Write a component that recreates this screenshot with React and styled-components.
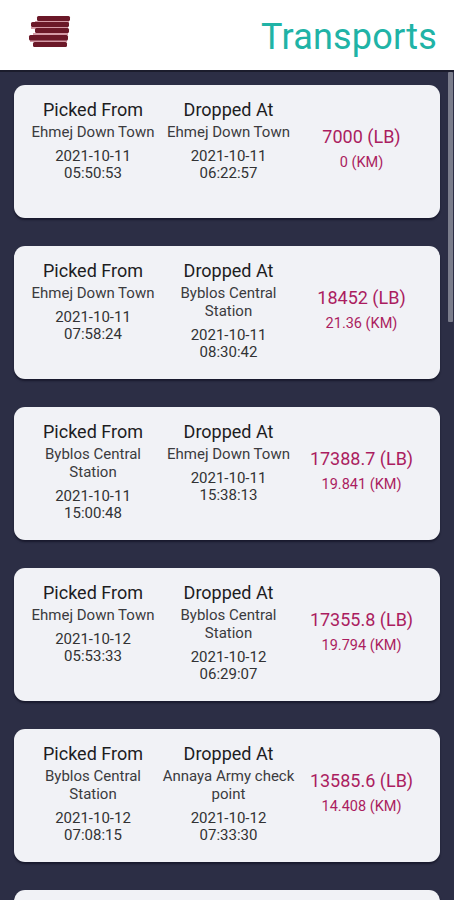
import React from "react";
import styled, { createGlobalStyle } from "styled-components";

const Global = createGlobalStyle`
  html, body { margin: 0; padding: 0; height: 100%; overflow: hidden; }
  body { font-family: Roboto, "Noto Sans", Arial, sans-serif; background: #2c2e45; }
  #root { height: 100%; }
`;

const Screen = styled.div`
  position: relative;
  width: 454px;
  height: 900px;
  display: flex;
  flex-direction: column;
  background: #2c2e45;
  overflow: hidden;
`;

const Header = styled.header`
  flex: 0 0 auto;
  height: 70px;
  background: #ffffff;
  border-bottom: 2px solid #1b1c2c;
  display: flex;
  align-items: center;
  justify-content: space-between;
  padding: 0 17px 0 28px;
`;

const Title = styled.h1`
  margin: 0;
  font-family: Roboto, sans-serif;
  font-weight: 400;
  font-size: 36px;
  color: #20b3a6;
  letter-spacing: 0.2px;
  line-height: 1;
  padding-top: 4px;
`;

const LogoWrap = styled.div`
  width: 44px;
  height: 36px;
  margin-top: -3px;
`;

const List = styled.main`
  flex: 1 1 auto;
  display: flex;
  flex-direction: column;
  gap: 28px;
  padding: 13px 14px 0 14px;
`;

const Card = styled.section`
  flex: 0 0 auto;
  height: 133px;
  box-sizing: border-box;
  background: #f1f2f6;
  border-radius: 11px;
  box-shadow: 0 2px 2px rgba(10, 10, 25, 0.55);
  display: grid;
  grid-template-columns: 136px 135px 1fr;
  padding: 14px 13px 0 11px;
`;

const Col = styled.div`
  display: flex;
  flex-direction: column;
  align-items: center;
  text-align: center;
`;

const Heading = styled.div`
  font-size: 18px;
  line-height: 22px;
  color: #1d1d1f;
`;

const Place = styled.div`
  font-size: 15px;
  line-height: 18px;
  color: #3b3b3e;
  margin-top: 2px;
`;

const Stamp = styled.div`
  font-size: 15px;
  line-height: 17px;
  color: #323234;
  margin-top: 7px;
`;

const PriceCol = styled.div`
  display: flex;
  flex-direction: column;
  align-items: center;
  justify-content: center;
  margin-top: -14px;
  padding-bottom: 6px;
`;

const Price = styled.div`
  font-size: 18px;
  line-height: 24px;
  color: #ab1d60;
`;

const Dist = styled.div`
  font-size: 14.5px;
  line-height: 20px;
  color: #ab1d60;
  margin-top: 4px;
`;

const ScrollThumb = styled.div`
  position: absolute;
  right: 1px;
  top: 72px;
  width: 5px;
  height: 250px;
  background: #7b7d8c;
  border-radius: 1px;
`;

const Logo = () => (
  <svg width="44" height="36" viewBox="0 0 44 36">
    <g fill="#d49aa6">
      <rect x="7" y="5" width="34" height="2" />
      <rect x="3" y="11" width="37" height="2" />
      <rect x="5" y="17" width="35" height="2" />
      <rect x="2" y="24" width="37" height="2" />
    </g>
    <g fill="#6b1828">
      <rect x="9" y="0" width="33" height="5" rx="1.5" />
      <rect x="3" y="6" width="38" height="5" rx="1.5" />
      <rect x="7" y="12" width="34" height="5" rx="1.5" />
      <rect x="1" y="19" width="39" height="5.5" rx="1.5" />
      <rect x="5" y="26" width="34" height="5" rx="1.5" />
    </g>
  </svg>
);

const trips = [
  {
    from: "Ehmej Down Town", fd: "2021-10-11", ft: "05:50:53",
    to: "Ehmej Down Town", td: "2021-10-11", tt: "06:22:57",
    price: "7000 (LB)", km: "0 (KM)",
  },
  {
    from: "Ehmej Down Town", fd: "2021-10-11", ft: "07:58:24",
    to: "Byblos Central Station", td: "2021-10-11", tt: "08:30:42",
    price: "18452 (LB)", km: "21.36 (KM)",
  },
  {
    from: "Byblos Central Station", fd: "2021-10-11", ft: "15:00:48",
    to: "Ehmej Down Town", td: "2021-10-11", tt: "15:38:13",
    price: "17388.7 (LB)", km: "19.841 (KM)",
  },
  {
    from: "Ehmej Down Town", fd: "2021-10-12", ft: "05:53:33",
    to: "Byblos Central Station", td: "2021-10-12", tt: "06:29:07",
    price: "17355.8 (LB)", km: "19.794 (KM)",
  },
  {
    from: "Byblos Central Station", fd: "2021-10-12", ft: "07:08:15",
    to: "Annaya Army check point", td: "2021-10-12", tt: "07:33:30",
    price: "13585.6 (LB)", km: "14.408 (KM)",
  },
  {
    from: "Annaya Army check point", fd: "2021-10-12", ft: "08:02:11",
    to: "Byblos Central Station", td: "2021-10-12", tt: "08:27:40",
    price: "13610.2 (LB)", km: "14.437 (KM)",
  },
];

export default function App() {
  return (
    <>
      <Global />
      <Screen>
        <Header>
          <LogoWrap>
            <Logo />
          </LogoWrap>
          <Title>Transports</Title>
        </Header>
        <List>
          {trips.map((t, i) => (
            <Card key={i}>
              <Col>
                <Heading>Picked From</Heading>
                <Place>{t.from}</Place>
                <Stamp>
                  {t.fd}
                  <br />
                  {t.ft}
                </Stamp>
              </Col>
              <Col>
                <Heading>Dropped At</Heading>
                <Place>{t.to}</Place>
                <Stamp>
                  {t.td}
                  <br />
                  {t.tt}
                </Stamp>
              </Col>
              <PriceCol>
                <Price>{t.price}</Price>
                <Dist>{t.km}</Dist>
              </PriceCol>
            </Card>
          ))}
        </List>
        <ScrollThumb />
      </Screen>
    </>
  );
}
